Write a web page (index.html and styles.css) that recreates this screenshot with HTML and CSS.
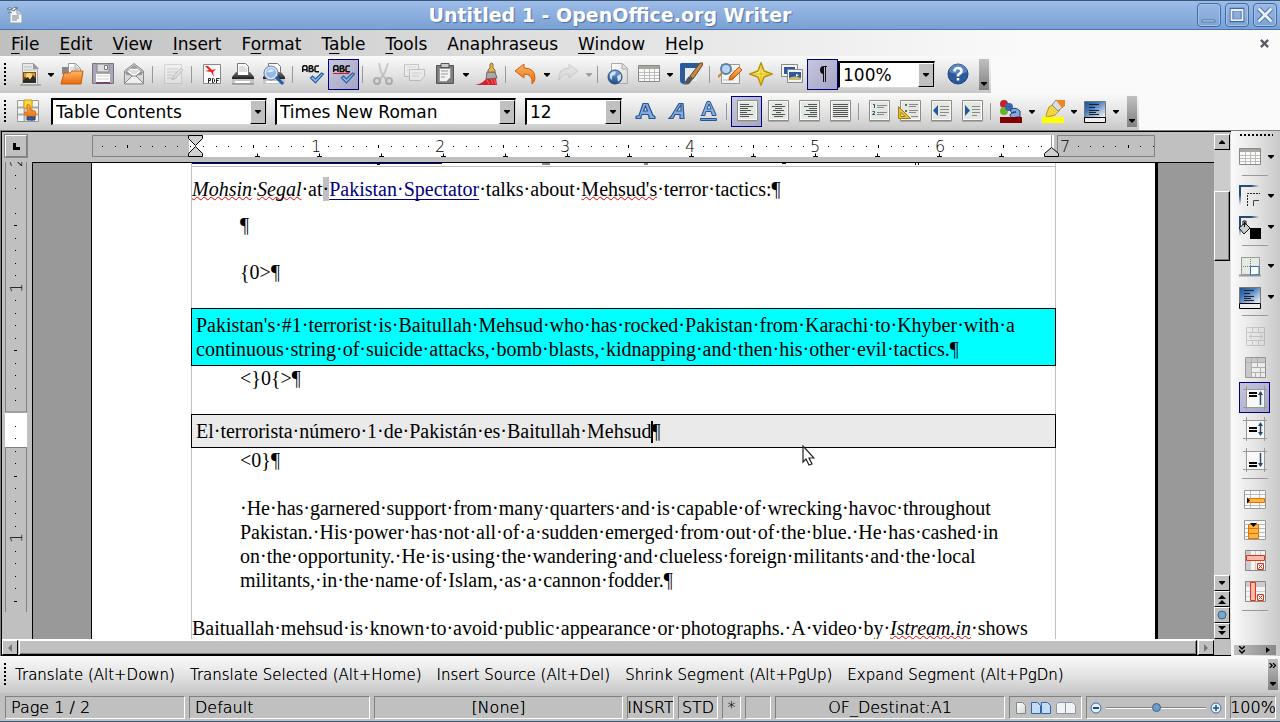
FILE: index.html
```html
<!DOCTYPE html>
<html lang="en">
<head>
<meta charset="utf-8">
<title>Untitled 1 - OpenOffice.org Writer</title>
<link rel="stylesheet" href="styles.css">
</head>
<body>
<svg class="sprite" aria-hidden="true">
  <defs>
    <linearGradient id="g-paper" x2="1" y2="1"><stop stop-color="#fff"/><stop offset="1" stop-color="#d2d6d2"/></linearGradient>
    <linearGradient id="g-or" x2="0" y2="1"><stop stop-color="#ffb768"/><stop offset="1" stop-color="#e8690b"/></linearGradient>
    <linearGradient id="g-blue" x2="0" y2="1"><stop stop-color="#7fa8dc"/><stop offset="1" stop-color="#1e4784"/></linearGradient>
    <linearGradient id="g-bg" x2="1" y2="1"><stop stop-color="#1d4f91"/><stop offset=".35" stop-color="#3f77bb"/><stop offset="1" stop-color="#fff"/></linearGradient>
    <linearGradient id="g-edge" x2="1" y2="0"><stop stop-color="#274b78"/><stop offset=".6" stop-color="#274b78"/><stop offset="1" stop-color="#274b78" stop-opacity="0"/></linearGradient>
    <linearGradient id="g-side" x2="0" y2="1"><stop stop-color="#274b78"/><stop offset=".5" stop-color="#274b78"/><stop offset="1" stop-color="#274b78" stop-opacity="0"/></linearGradient>
    <linearGradient id="g-gold" x2="1" y2="1"><stop stop-color="#fffbd0"/><stop offset="1" stop-color="#f0c800"/></linearGradient>
    <linearGradient id="g-dark" x2="0" y2="1"><stop stop-color="#777"/><stop offset="1" stop-color="#111"/></linearGradient>
  </defs>
  <symbol id="i-app" viewBox="0 0 16 18"><path d="M3 4h8l4 4v9H3z" fill="#f6f8fa" stroke="#8ba0b4"/><path d="M10 4v4h5" fill="#cdd9e4" stroke="#8ba0b4"/><path d="M5 10h7M5 12h7M5 14h5" stroke="#6c8496"/><path d="M0 3q3-3 5 0 2-3 6-1-3 0-4 3-3-2-7-2M1 7q2-2 4 0" fill="#fff" stroke="#5f7486"/></symbol>
  <symbol id="i-new" viewBox="0 0 24 24"><path d="M2 22h21v2H2z" fill="#aaa"/><path d="M4.500 1.500h11l4 4v17h-15z" fill="#e8e8e8" stroke="#aaa"/><path d="M15 1l6 6h-6z" fill="#999"/><path d="M6 5h8M6 8h12" stroke="#bbb"/><path d="M5 10h13v11H5z" fill="#76501e"/><path d="M6 11h11v4H6z" fill="#d79a31"/><circle cx="11" cy="14" r="3" fill="#ffd775"/><path d="M5 18l5-3 2 3 3-5 3 4v4H5z" fill="#2f2c22"/></symbol>
  <symbol id="i-open" viewBox="0 0 24 24"><path d="M2 5h6l2 2h7v5H2z" fill="#888"/><path d="M8.500 1.500h7l5 5v7h-12z" fill="#fff" stroke="#999"/><path d="M15 2v5h5" fill="#ddd" stroke="#aaa"/><path d="M10 6h4M10 8h8" stroke="#bbb"/><path d="M4 11h6l2-2h11l-2 13H1z" fill="url(#g-or)" stroke="#c75c0b"/></symbol>
  <symbol id="i-save" viewBox="0 0 24 24"><path d="M1.500 1.500h21v20h-21z" fill="#aaa6b8" stroke="#77747f"/><path d="M6 2h12v8H6z" fill="#dcdce4" stroke="#888"/><path d="M13.500 3.500h3v4h-3z" fill="#fff" stroke="#777"/><path d="M4.500 11.500h15v9h-15z" fill="#fff" stroke="#aaa"/><path d="M6 14h12M6 17h12" stroke="#ccc"/><path d="M5 20h14v2H5z" fill="#76447a"/></symbol>
  <symbol id="i-mail" viewBox="0 0 24 24"><path d="M2.500 9L12 1.500 21.500 9v13h-19z" fill="#d8d8d8" stroke="#888"/><path d="M4 9l8-6 8 6v4H4z" fill="#999"/><path d="M5 9.500l3-3h8l3 3-7 6z" fill="#fff" stroke="#aaa"/><path d="M7 9h10M9 11h6" stroke="#bbb"/><path d="M3 21l7-7h4l7 7M3 10l7 4M21 10l-7 4" fill="#eee" stroke="#888"/></symbol>
  <symbol id="i-edit" viewBox="0 0 24 24"><path d="M3.500 2.500h17v19h-17z" fill="#f4f4f4" stroke="#999"/><path d="M6 7h11M6 10h10M6 13h6M6 16h5" stroke="#aaa" stroke-width="1.500"/><path d="M11 18l2-5 7-7 2 2-7 8z" fill="#ccc" stroke="#666"/></symbol>
  <symbol id="i-pdf" viewBox="0 0 24 24"><path d="M3.500 2.500h17v19h-17z" fill="#fafafa" stroke="#888"/><path d="M5 4l3 0 4 4 4-1-3 3 1 5-3-5-6-1 4-1z" fill="#e22"/><g fill="none" stroke="#222" stroke-width="1"><path d="M8.500 21v-4.500h2v2h-2M12.500 16.500h1l1 1v2l-1 1h-1zM16.500 21v-4.500h3M16.500 18.500h2"/></g></symbol>
  <symbol id="i-print" viewBox="0 0 24 24"><path d="M6.500 1.500h8l3 3v9h-11z" fill="#fff" stroke="#777"/><path d="M8 5h6M8 7h8M8 9h8" stroke="#bbb"/><path d="M1 15l4-5h2v3h11v-3h1l4 5v3H1z" fill="url(#g-dark)"/><path d="M1 17h22v5H1z" fill="#c4c4c8"/><path d="M4 19h15v2H4z" fill="#fff"/><path d="M1 22h22" stroke="#777"/></symbol>
  <symbol id="i-preview" viewBox="0 0 24 24"><path d="M6.500 1.500h9l3 3v9h-12z" fill="#fff" stroke="#777"/><path d="M1 15l4-5h14l4 5v3H1z" fill="url(#g-dark)"/><path d="M1 17h22v5H1z" fill="#c4c4c8"/><path d="M4 19h13v2H4z" fill="#fff"/><circle cx="9" cy="11" r="6" fill="#8fb9e8" stroke="#dfe6ee" stroke-width="2"/><circle cx="9" cy="11" r="7" fill="none" stroke="#5c7ba6"/><path d="M5 10q3-5 7-2-1 3-7 2" fill="#dcebfa"/><path d="M14 15l7 7" stroke="#235ba5" stroke-width="3"/></symbol>
  <symbol id="i-abc" viewBox="0 0 24 24"><g fill="none" stroke="#111" stroke-width="1.500"><path d="M1.700 10V5l1-1.200h2.500l.8 1.200v5M2 7.700h4M8.200 3.800v5.600h3l1-1v-1l-1-1H8.500M8.200 3.800h2.500l1 1-1 1.500M18 4h-3l-1 1v4l1 .7h3"/></g></symbol>
  <symbol id="i-check" viewBox="0 0 24 24"><path d="M9.500 16l2-2 3 3 6-6 2 1-8 9z" fill="#8cc2f2" stroke="#2c5d99" stroke-width="1.200"/></symbol>
  <symbol id="i-cut" viewBox="0 0 24 24"><path d="M8 1l2 9 6 9M17 1l-3 9-6 9" fill="none" stroke="#777" stroke-width="2"/><circle cx="6" cy="19" r="3" fill="none" stroke="#444" stroke-width="2"/><circle cx="18" cy="19" r="3" fill="none" stroke="#444" stroke-width="2"/></symbol>
  <symbol id="i-copy" viewBox="0 0 24 24"><path d="M2.500 2.500h14v12h-14z" fill="#f5f5f5" stroke="#666"/><path d="M5 5h9M5 8h3" stroke="#999"/><path d="M7.500 7.500h15v7l-4 4h-11z" fill="#f5f5f5" stroke="#666"/><path d="M10 11h10M10 14h7" stroke="#999"/></symbol>
  <symbol id="i-paste" viewBox="0 0 24 24"><path d="M3.500 3.500h17v18h-17z" fill="#7d7d7d" stroke="#555"/><path d="M8 1.500h8v4H8z" fill="#ccc" stroke="#555"/><path d="M6.500 6.500h11v9l-4 4h-7z" fill="#f2f2f2" stroke="#999"/><path d="M8 9h7M8 12h7M8 15h4" stroke="#999"/></symbol>
  <symbol id="i-brush" viewBox="0 0 24 24"><path d="M0 23q7-1 11-6l10-1 1 7z" fill="#d3202c"/><path d="M12 18l2 4m2-5l2 5m1-5l2 5" stroke="#f66"/><path d="M12 10h8l2 6-11 1z" fill="#aaa" stroke="#666"/><path d="M13 10V8l2-2V2q2-2 3 0v4l2 2v2z" fill="#e5b35d" stroke="#8f6a2c"/></symbol>
  <symbol id="i-undo" viewBox="0 0 24 24"><path d="M1 9l9-7v4q11 0 11 10 0 3-3 6 1-10-8-10v4z" fill="url(#g-or)" stroke="#d0600a"/></symbol>
  <symbol id="i-redo" viewBox="0 0 24 24"><path d="M22 9l-9-7v4Q2 6 3 18q3-6 10-6v4z" fill="#ccc" stroke="#888"/></symbol>
  <symbol id="i-link" viewBox="0 0 24 24"><path d="M5.500 1.500h11l5 5v15h-16z" fill="url(#g-paper)" stroke="#aaa"/><path d="M16 2v5h5" fill="#ddd" stroke="#aaa"/><circle cx="9" cy="15" r="7" fill="url(#g-blue)" stroke="#245089"/><path d="M4 12q3-4 6-2l-1 3-3 1v4l-2-2zM11 14l4-2v5l-3 3z" fill="#cfe2f5"/></symbol>
  <symbol id="i-table" viewBox="0 0 24 24"><path d="M1.500 3.500h21v16h-21z" fill="#fafaf8" stroke="#888"/><path d="M2 4h20v3H2z" fill="#a8a8a0"/><path d="M2 10.500h20M2 13.500h20M2 16.500h20M7.500 7v12M12.500 7v12M17.500 7v12" stroke="#bbb"/></symbol>
  <symbol id="i-draw" viewBox="0 0 24 24"><path d="M2 1h20L5 22q-4 0-4-4V2z" fill="#2a5a9a"/><path d="M6 6h12v13H6z" fill="#e6ebf2"/><path d="M11 14L21 1h3l-1 3-9 13z" fill="#c48a4b" stroke="#6d4a25"/><path d="M10 14l4 3-4 5q-4 1-6 0 3-1 3-4z" fill="#555"/></symbol>
  <symbol id="i-find" viewBox="0 0 24 24"><path d="M3.500 2.500h18v19h-18z" fill="#f3f3f0" stroke="#999"/><path d="M12 9h6M5 18h11" stroke="#bbb"/><circle cx="8" cy="7" r="5" fill="#b9d4ef" stroke="#5d7fae" stroke-width="2"/><path d="M4 11l-4 4" stroke="#b89022" stroke-width="2"/><path d="M11 18l1-4 9-9 3 3-9 9z" fill="url(#g-or)" stroke="#b75c0c"/></symbol>
  <symbol id="i-nav" viewBox="0 0 24 24"><path d="M12 1l3 8 8 3-8 3-3 8-3-8-8-3 8-3z" fill="url(#g-gold)" stroke="#b39400" stroke-width="1.500"/><path d="M12 3v18M3 12h18" stroke="#dfbf13"/></symbol>
  <symbol id="i-gallery" viewBox="0 0 24 24"><path d="M1.500 2.500h16v12h-16z" fill="#f4f4f4" stroke="#888"/><path d="M4 5h11v7H4z" fill="#2a5a9a"/><path d="M7.500 7.500h15v13h-15z" fill="#f4f4f4" stroke="#888"/><path d="M9 10h12v8H9z" fill="#2a5a9a"/><path d="M9 16q5-3 12 0v2H9z" fill="#c9b96a"/><path d="M16 12l3 1-3 2z" fill="#fff"/></symbol>
  <symbol id="i-pil" viewBox="0 0 24 24"><path d="M9 8q0-4 4-4h3v1h-1v15h-1V5h-1v15h-1v-8q-3-.5-3-4" fill="#111"/></symbol>
  <symbol id="i-help" viewBox="0 0 24 24"><circle cx="12" cy="12" r="10" fill="#2c589c" stroke="#1d4481"/><path d="M3 10a9 8 0 0 1 18 0q-9 4-18 0" fill="#7198cf" opacity=".7"/><path d="M8.500 9.500q0-3.500 3.500-3.500t3.500 3q0 1.700-3.500 4v1.500M12 16v2.500" fill="none" stroke="#fff" stroke-width="2.600"/></symbol>
  <symbol id="i-styles" viewBox="0 0 24 24"><path d="M1.500 1.500h21v21h-21z" fill="#f4f4f2" stroke="#999"/><path d="M2 8.500h20M2 15.500h20M8.500 2v20M15.500 2v20" stroke="#aaa" stroke-width="2"/><path d="M8 1h8v8H8z" fill="#ffd84a" stroke="#c9a000"/><path d="M11 6q2-2 3 1v4l5 1q2 2 0 7h-7l-4-5q1-2 3 0z" fill="url(#g-or)" stroke="#d96f0b"/><path d="M11 18h8v3h-8z" fill="#2d5fa4" stroke="#173f78"/></symbol>
  <symbol id="i-bold" viewBox="0 0 24 24"><path d="M2 19.500h5v-2l1-2h6l1 2v2h6v-2l-2-1L14 4.500H9L5 16.500l-3 1zM9.500 12l2-5 2 5z" fill="#83aae0" stroke="#27558f" fill-rule="evenodd" stroke-width="1.200"/></symbol>
  <symbol id="i-italic" viewBox="0 0 24 24"><path d="M4 19.500h4l2-4h5v4h4L18 4.500h-4L6 17.500zM12 12l4-6v6z" fill="#83aae0" stroke="#27558f" fill-rule="evenodd" stroke-width="1.200"/></symbol>
  <symbol id="i-under" viewBox="0 0 24 24"><path d="M5 16.500h4v-1l1-3h5l1 3v1h4v-1L14 2.500h-3L6 15.500zM11 10l2-5 2 5z" fill="#83aae0" stroke="#27558f" fill-rule="evenodd"/><path d="M4.500 19.500h16v2h-16z" fill="#6f9bd8" stroke="#27558f"/></symbol>
  <symbol id="i-paper" viewBox="0 0 24 24"><path d="M2 22.500h21" stroke="#aaa"/><path d="M2.500 1.500h20v20h-20z" fill="#fafafa" stroke="#8d8d85"/><path d="M4 3h17v17H4z" fill="#e4e8e2"/></symbol>
  <symbol id="i-left" viewBox="0 0 24 24"><use href="#i-paper"/><path d="M5 5.500h9M5 7.500h13M5 9.500h8M5 11.500h11M5 13.500h7M5 15.500h13M5 17.500h9" stroke="#555"/></symbol>
  <symbol id="i-center" viewBox="0 0 24 24"><use href="#i-paper"/><path d="M9 5.500h7M6 7.500h13M9 9.500h7M7 11.500h11M10 13.500h5M6 15.500h13M8 17.500h9" stroke="#555"/></symbol>
  <symbol id="i-right" viewBox="0 0 24 24"><use href="#i-paper"/><path d="M11 5.500h9M7 7.500h13M12 9.500h8M9 11.500h11M13 13.500h7M7 15.500h13M11 17.500h9" stroke="#555"/></symbol>
  <symbol id="i-just" viewBox="0 0 24 24"><use href="#i-paper"/><path d="M5 5.500h15M5 7.500h15M5 9.500h15M5 11.500h15M5 13.500h15M5 15.500h15M5 17.500h15" stroke="#555"/></symbol>
  <symbol id="i-num" viewBox="0 0 24 24"><use href="#i-paper"/><path d="M6 5.500h1.500V9M5.500 12.500h2v1.500l-2 1.500h2.500" fill="none" stroke="#245391"/><path d="M10 6.500h10M10 8.500h7M10 13.500h10M10 15.500h7" stroke="#888"/></symbol>
  <symbol id="i-bul" viewBox="0 0 24 24"><use href="#i-paper"/><path d="M7 5h2v2H7zM7 11h2v2H7z" fill="#666"/><path d="M11 5.500h9M11 7.500h7M11 11.500h9M11 13.500h7M13 17.500h7" stroke="#888"/><path d="M.5 7.500v12h12zM3 13.500v4h4z" fill="#e7bd35" fill-rule="evenodd" stroke="#a77e0a"/></symbol>
  <symbol id="i-dec" viewBox="0 0 24 24"><use href="#i-paper"/><path d="M9 6v11L4 11.500z" fill="#2459a0"/><path d="M11 7.500h9M11 10.500h9M11 13.500h9M11 16.500h6" stroke="#888"/></symbol>
  <symbol id="i-inc" viewBox="0 0 24 24"><use href="#i-paper"/><path d="M5 6v11l5-5.500z" fill="#2459a0"/><path d="M12 7.500h8M12 10.500h8M12 13.500h8M12 16.500h5" stroke="#888"/></symbol>
  <symbol id="i-fcol" viewBox="0 0 24 24"><circle cx="5" cy="5" r="4" fill="#c8202e"/><circle cx="5" cy="12" r="4" fill="#66b52e"/><circle cx="10" cy="8" r="4" fill="#3a66ae"/><path d="M11 11q5-4 10 1v6h-3l-5 1q-4-3 0-5l4-1q-2-1-4 1z" fill="#83aae0" stroke="#1d4275"/><path d="M1 18h22v6H1z" fill="#800000"/></symbol>
  <symbol id="i-high" viewBox="0 0 24 24"><path d="M5 16l3-8 5-3 6 6-5 5-8 2z" fill="#f3d540" stroke="#b8960e"/><path d="M11 6l4-5 7 7-5 4z" fill="#ddd" stroke="#888"/><path d="M15 1h9v6l-3 2z" fill="#ef8526"/><path d="M1 18h22v6H1z" fill="#ff0"/></symbol>
  <symbol id="i-bgc" viewBox="0 0 24 24"><path d="M1.500 2.500h21v16h-21z" fill="url(#g-bg)" stroke="#777"/><path d="M6 5.500h10M6 8.500h6M6 11.500h10M6 13.500h7M6 15.500h10" stroke="#222"/><path d="M1.500 18.500h21v5h-21z" fill="#eee" stroke="#000"/></symbol>
  <symbol id="i-line" viewBox="0 0 24 24"><path d="M1 1h20v2H1z" fill="url(#g-edge)"/><path d="M1 1h2v20H1z" fill="url(#g-side)"/><path d="M9.500 22V9.500H22" fill="none" stroke="#222" stroke-dasharray="2 1"/><path d="M15.500 22v-5.500H21" fill="none" stroke="#444"/></symbol>
  <symbol id="i-fill" viewBox="0 0 24 24"><path d="M1 1h20v2H1z" fill="url(#g-edge)"/><path d="M1 1h2v20H1z" fill="url(#g-side)"/><path d="M6.500 7v5M1 13l6-5 5 5-6 6z" fill="#ccc" stroke="#111"/><path d="M5 10V6h3v4" fill="none" stroke="#111"/><path d="M12 13h11v11H12z"/></symbol>
  <symbol id="i-bord" viewBox="0 0 24 24"><path d="M1 21.500h22" stroke="#999" stroke-width="2"/><path d="M3.500 3.500h18v17h-18z" fill="#e6eae4" stroke="#999"/><path d="M12.500 5v7M5 12.500h7" stroke="#777" stroke-dasharray="1 1"/><path d="M12.500 21v-8.500H21V20.500z" fill="#fff" stroke="#3469ad"/></symbol>
  <symbol id="i-merge" viewBox="0 0 24 24"><path d="M3.500 3.500h18v18h-18zM9.500 4v4M15.500 4v4M3.500 8.500h18v8h-18zM9.500 17v4M15.500 17v4M7 12.500h12M9 10l-3 2.500L9 15M17 10l3 2.500-3 2.500" fill="none" stroke="#777"/></symbol>
  <symbol id="i-split" viewBox="0 0 24 24"><path d="M2.500 2.500h20v20h-20z" fill="#f3f3f3" stroke="#777"/><path d="M3 3h19v4H3zM3 7h5v15H3z" fill="#bbb"/><path d="M8.500 3v19M3 7.500h19M8.500 12.500H22M8.500 17.500H22M14.500 3v9M17.500 12v10M12.500 17v5" stroke="#999"/></symbol>
  <symbol id="i-frame" viewBox="0 0 24 24"><path d="M3 3h18v18H3z" fill="#f8f8f8"/><path d="M0 3.500h24M0 21.500h24M3.500 0v24M21.500 0v24" stroke="#999"/></symbol>
  <symbol id="i-top" viewBox="0 0 24 24"><use href="#i-frame"/><path d="M6 7h8M6 10h8" stroke="#000" stroke-width="2"/><path d="M17.500 6v13" stroke="#274b78" stroke-width="1.500"/><path d="M15 9l2.500-4L20 9z" fill="#274b78"/></symbol>
  <symbol id="i-mid" viewBox="0 0 24 24"><use href="#i-frame"/><path d="M6 11h8M6 14h8" stroke="#000" stroke-width="2"/><path d="M17.500 7v10" stroke="#274b78" stroke-width="1.500"/><path d="M15 9l2.500-4L20 9zM15 15l2.500 4 2.500-4z" fill="#274b78"/></symbol>
  <symbol id="i-bot" viewBox="0 0 24 24"><use href="#i-frame"/><path d="M6 15h8M6 18h8" stroke="#000" stroke-width="2"/><path d="M17.500 5v13" stroke="#274b78" stroke-width="1.500"/><path d="M15 15l2.500 4 2.500-4z" fill="#274b78"/></symbol>
  <symbol id="i-irow" viewBox="0 0 24 24"><path d="M1.500 3.500h21v18h-21z" fill="#fafafa" stroke="#999"/><path d="M7.500 4v17M16.500 4v17M2 7.500h20M2 18.500h20" stroke="#bbb"/><path d="M4.500 11.500h17v4h-17z" fill="#ffb347" stroke="#dc7500"/><path d="M4 10.500v6l3-3z"/></symbol>
  <symbol id="i-icol" viewBox="0 0 24 24"><path d="M1.500 2.500h21v19h-21z" fill="#fafafa" stroke="#999"/><path d="M2 6.500h20M2 10.500h20M2 14.500h20M2 18.500h20" stroke="#bbb"/><path d="M5.500 6.500h10v14h-10zM5.500 10.500h10M5.500 15.500h10" fill="#ffb347" stroke="#dc7500"/><path d="M7 5h7l-3.500 4z"/></symbol>
  <symbol id="i-x" viewBox="0 0 24 24"><path d="M14.500 14.500h6v6h-6zM15.500 15.500l4 4m0-4l-4 4" fill="#fff" stroke="#d83a17"/></symbol>
  <symbol id="i-drow" viewBox="0 0 24 24"><path d="M2.500 1.500h20v20h-20z" fill="#f4f4f4" stroke="#888"/><path d="M3 2h4v19H3z" fill="#ccc"/><path d="M7.500 2v19M12.500 2v19M17.500 2v19" stroke="#ccc"/><path d="M3.500 6.500h18v5h-18z" fill="#f9b9ac" stroke="#d83a17"/><use href="#i-x"/></symbol>
  <symbol id="i-dcol" viewBox="0 0 24 24"><path d="M2.500 1.500h20v20h-20z" fill="#f4f4f4" stroke="#888"/><path d="M3 2h19v4H3z" fill="#ccc"/><path d="M3 6.500h19M3 11.500h19M3 16.500h19" stroke="#ccc"/><path d="M7.500 2.500h5v18h-5z" fill="#f9b9ac" stroke="#d83a17"/><use href="#i-x"/></symbol>
  <symbol id="i-down" viewBox="0 0 8 5"><path d="M1 1h6v1L4 5 1 2z"/></symbol>
  <symbol id="i-p1" viewBox="0 0 10 12"><path d="M.5.500h6l3 3v8h-9z" fill="url(#g-paper)" stroke="#7b8794"/></symbol>
</svg>

<header class="title">
  <svg class="app"><use href="#i-app"/></svg>
  <h1>Untitled 1 - OpenOffice.org Writer</h1>
  <button aria-label="Minimize"><svg viewBox="0 0 24 24"><path d="M4.500 17.500h14v2h-14z" fill="#fff" stroke="#4169a0"/></svg></button>
  <button aria-label="Maximize"><svg viewBox="0 0 24 24"><path d="M6 6h12v12H6z" fill="none" stroke="#4169a0" stroke-width="4"/><path d="M6 6.500h12v11H6z" fill="none" stroke="#e9f0fa" stroke-width="2"/></svg></button>
  <button aria-label="Close"><svg viewBox="0 0 24 24"><path d="M5 5l14 14M19 5L5 19" stroke="#4169a0" stroke-width="5"/><path d="M5 5l14 14M19 5L5 19" stroke="#e9f0fa" stroke-width="3"/></svg></button>
</header>

<nav class="menu">
  <button><u>F</u>ile</button><button><u>E</u>dit</button><button><u>V</u>iew</button><button><u>I</u>nsert</button><button>F<u>o</u>rmat</button><button>T<u>a</u>ble</button><button><u>T</u>ools</button><button>Anaphraseus</button><button><u>W</u>indow</button><button><u>H</u>elp</button>
  <button class="shut" aria-label="Close document"><svg viewBox="0 0 10 10"><path d="M1 1l8 8M9 1L1 9" stroke="#555d66" stroke-width="2.500"/></svg></button>
</nav>

<div class="bar standard">
  <i class="grip"></i>
  <button class="tb" aria-label="New"><svg><use href="#i-new"/></svg></button><button class="dd" aria-label="New options"><svg><use href="#i-down"/></svg></button>
  <button class="tb" aria-label="Open"><svg><use href="#i-open"/></svg></button>
  <button class="tb" aria-label="Save"><svg><use href="#i-save"/></svg></button>
  <button class="tb" aria-label="E-mail"><svg><use href="#i-mail"/></svg></button>
  <i class="sep"></i>
  <button class="tb off" aria-label="Edit file"><svg><use href="#i-edit"/></svg></button>
  <i class="sep"></i>
  <button class="tb" aria-label="Export PDF"><svg><use href="#i-pdf"/></svg></button>
  <button class="tb" aria-label="Print"><svg><use href="#i-print"/></svg></button>
  <button class="tb" aria-label="Page preview"><svg><use href="#i-preview"/></svg></button>
  <i class="sep"></i>
  <button class="tb" aria-label="Spellcheck"><svg viewBox="0 0 24 24"><use href="#i-abc"/><use href="#i-check"/></svg></button>
  <button class="tb on" aria-label="AutoSpellcheck"><svg viewBox="0 0 24 24"><use href="#i-abc"/><path d="M1 12l1-1 1 1 1-1 1 1 1-1 1 1 1-1 1 1 1-1 1 1 1-1 1 1 1-1 1 1 1-1 1 1" fill="none" stroke="#e01020"/><use href="#i-check"/></svg></button>
  <i class="sep"></i>
  <button class="tb off" aria-label="Cut"><svg><use href="#i-cut"/></svg></button>
  <button class="tb off" aria-label="Copy"><svg><use href="#i-copy"/></svg></button>
  <button class="tb" aria-label="Paste"><svg><use href="#i-paste"/></svg></button><button class="dd" aria-label="Paste options"><svg><use href="#i-down"/></svg></button>
  <button class="tb" aria-label="Format paintbrush"><svg><use href="#i-brush"/></svg></button>
  <i class="sep"></i>
  <button class="tb" aria-label="Undo"><svg><use href="#i-undo"/></svg></button><button class="dd" aria-label="Undo list"><svg><use href="#i-down"/></svg></button>
  <button class="tb off" aria-label="Redo"><svg><use href="#i-redo"/></svg></button><button class="dd off" aria-label="Redo list"><svg><use href="#i-down"/></svg></button>
  <i class="sep"></i>
  <button class="tb" aria-label="Hyperlink"><svg><use href="#i-link"/></svg></button>
  <button class="tb" aria-label="Table"><svg><use href="#i-table"/></svg></button><button class="dd" aria-label="Table size"><svg><use href="#i-down"/></svg></button>
  <button class="tb" aria-label="Draw functions"><svg><use href="#i-draw"/></svg></button>
  <i class="sep"></i>
  <button class="tb" aria-label="Find and replace"><svg><use href="#i-find"/></svg></button>
  <button class="tb" aria-label="Navigator"><svg><use href="#i-nav"/></svg></button>
  <button class="tb" aria-label="Gallery"><svg><use href="#i-gallery"/></svg></button>
  <button class="tb on" aria-label="Nonprinting characters"><svg><use href="#i-pil"/></svg></button>
  <label class="combo zoom"><select aria-label="Zoom"><option>100%</option></select><span><svg><use href="#i-down"/></svg></span></label>
  <button class="tb help" aria-label="Help"><svg><use href="#i-help"/></svg></button>
  <button class="more" aria-label="More"><svg><use href="#i-down"/></svg></button>
</div>

<div class="bar formatting">
  <i class="grip"></i>
  <button class="tb" aria-label="Styles and Formatting"><svg><use href="#i-styles"/></svg></button>
  <label class="combo style"><select aria-label="Apply style"><option>Table Contents</option></select><span><svg><use href="#i-down"/></svg></span></label>
  <label class="combo font"><select aria-label="Font name"><option>Times New Roman</option></select><span><svg><use href="#i-down"/></svg></span></label>
  <label class="combo size"><select aria-label="Font size"><option>12</option></select><span><svg><use href="#i-down"/></svg></span></label>
  <button class="tb bold" aria-label="Bold"><svg><use href="#i-bold"/></svg></button>
  <button class="tb" aria-label="Italic"><svg><use href="#i-italic"/></svg></button>
  <button class="tb" aria-label="Underline"><svg><use href="#i-under"/></svg></button>
  <i class="sep"></i>
  <button class="tb on" aria-label="Align left"><svg><use href="#i-left"/></svg></button>
  <button class="tb" aria-label="Centered"><svg><use href="#i-center"/></svg></button>
  <button class="tb" aria-label="Align right"><svg><use href="#i-right"/></svg></button>
  <button class="tb" aria-label="Justified"><svg><use href="#i-just"/></svg></button>
  <i class="sep"></i>
  <button class="tb" aria-label="Numbering"><svg><use href="#i-num"/></svg></button>
  <button class="tb" aria-label="Bullets"><svg><use href="#i-bul"/></svg></button>
  <button class="tb" aria-label="Decrease indent"><svg><use href="#i-dec"/></svg></button>
  <button class="tb" aria-label="Increase indent"><svg><use href="#i-inc"/></svg></button>
  <i class="sep"></i>
  <button class="tb" aria-label="Font color"><svg><use href="#i-fcol"/></svg></button><button class="dd" aria-label="Font colors"><svg><use href="#i-down"/></svg></button>
  <button class="tb" aria-label="Highlighting"><svg><use href="#i-high"/></svg></button><button class="dd" aria-label="Highlight colors"><svg><use href="#i-down"/></svg></button>
  <button class="tb" aria-label="Background color"><svg><use href="#i-bgc"/></svg></button><button class="dd" aria-label="Background colors"><svg><use href="#i-down"/></svg></button>
  <button class="more" aria-label="More"><svg><use href="#i-down"/></svg></button>
</div>

<main class="work">
  <div class="frame">
    <button class="tabkind" aria-label="Tab type"><svg viewBox="0 0 20 20"><path d="M7 7h3v4h4v3H7z"/></svg></button>
    <svg class="hruler" width="1064" height="24">
      <path d="M.5.500h97v21H.5zM965.500.500h97v21h-97z" fill="#c0c0c0" stroke="#808080"/>
      <path d="M97 0h865v22H97z" fill="#fff"/>
      <path d="M10 11.500h90M986 11.500h77" stroke="#000" stroke-dasharray="1 24"/><path d="M23 11.500h77M998 11.500h64" stroke="#000" stroke-dasharray="1 24"/>
      <path d="M111 11.500h840M124 11.500h840" stroke="#000" stroke-dasharray="1 24"/>
      <path d="M35.500 10v3M161.500 10v3M286.500 10v3M411.500 10v3M536.500 10v3M661.500 10v3M786.500 10v3M911.500 10v3M1036.500 10v3" stroke="#000"/>
      <path d="M217 5h14v13h-14zM341 5h14v13h-14zM466 5h14v13h-14zM591 5h14v13h-14zM716 5h14v13h-14zM841 5h14v13h-14z" fill="#fff"/>
      <path d="M163 21.500h5m-2.500 0v-3M225 21.500h5m-2.500 0v-3M287 21.500h5m-2.500 0v-3M349 21.500h5m-2.500 0v-3M411 21.500h5m-2.500 0v-3M473 21.500h5m-2.500 0v-3M535 21.500h5m-2.500 0v-3M597 21.500h5m-2.500 0v-3M659 21.500h5m-2.500 0v-3M721 21.500h5m-2.500 0v-3M783 21.500h5m-2.500 0v-3M845 21.500h5m-2.500 0v-3M907 21.500h5m-2.500 0v-3" stroke="#000"/>
      <g text-anchor="middle"><text x="224" y="17">1</text><text x="348" y="17">2</text><text x="473" y="17">3</text><text x="598" y="17">4</text><text x="723" y="17">5</text><text x="848" y="17">6</text><text x="973" y="17">7</text></g>
      <path d="M96.500.500h14v3l-7 7-7-7zM96.500 21.500v-3l7-7 7 7v3zM952.500 21.500v-3l7-6 7 6v3z" fill="#d0d0d0" stroke="#000"/><path d="M959.500 0v12" stroke="#999"/>
    </svg>
    <svg class="vruler" width="24" height="450">
      <path d="M.500-1v251h21V-1M.5 450V285.500h21V450" fill="none" stroke="#808080"/>
      <path d="M0 251h22v34H0z" fill="#fff"/>
      <path d="M10 13.500h1M10 26.500h1M10 51.500h1M9 63.500h3M10 76.500h1M10 88.500h1M10 101.500h1M10 113.500h1M10 138.500h1M10 151.500h1M10 163.500h1M10 176.500h1M9 188.500h3M10 201.500h1M10 213.500h1M10 226.500h1M10 238.500h1M10 264.500h1M10 276.500h1M10 289.500h1M10 301.500h1M9 314.500h3M10 326.500h1M10 339.500h1M10 351.500h1M10 364.500h1M10 389.500h1M10 401.500h1M10 414.500h1M10 426.500h1M9 439.500h3" stroke="#000"/>
      <g text-anchor="middle"><text transform="translate(17 0) rotate(-90)">2</text><text transform="translate(17 126) rotate(-90)">1</text><text transform="translate(17 376) rotate(-90)">1</text></g>
    </svg>
    <section class="view">
      <article class="page">
        <div class="column">
          <svg class="prev" width="863" height="3"><path d="M0 .5h250" stroke="#000080"/><path d="M185 1.500h3" stroke="#000080"/><path d="M350 1h8M452 1h4M590 .500h4M723.500 0v2M726.500 0v2" stroke="#111"/></svg>
          <p class="lead"><em><span class="bad">Mohsin</span>·<span class="bad">Segal</span></em>·at<span class="field">·</span><a href="#spectator">Pakistan·Spectator</a>·talks·about·<span class="bad">Mehsud's</span>·terror·tactics:¶</p>
          <p class="quote blank">¶</p>
          <p class="quote">{0&gt;¶</p>
          <div class="cell source">Pakistan's·#1·terrorist·is·Baitullah·Mehsud·who·has·rocked·Pakistan·from·Karachi·to·Khyber·with·a<br>continuous·string·of·suicide·attacks,·bomb·blasts,·kidnapping·and·then·his·other·evil·tactics.¶</div>
          <p class="quote">&lt;}0{&gt;¶</p>
          <div class="cell target">El·terrorista·número·1·de·Pakistán·es·Baitullah·Mehsud<span class="caret"></span>¶</div>
          <p class="quote">&lt;0}¶</p>
          <p class="quote">·He·has·garnered·support·from·many·quarters·and·is·capable·of·wrecking·havoc·throughout<br>Pakistan.·His·power·has·not·all·of·a·sudden·emerged·from·out·of·the·blue.·He·has·cashed·in<br>on·the·opportunity.·He·is·using·the·wandering·and·clueless·foreign·militants·and·the·local<br>militants,·in·the·name·of·Islam,·as·a·cannon·fodder.¶</p>
          <p class="last">Baituallah·mehsud·is·known·to·avoid·public·appearance·or·photographs.·A·video·by·<em class="bad">Istream.in</em>·shows</p>
        </div>
      </article>
      <svg class="pointer" viewBox="0 0 13 21"><path d="M1 1v16l3-3 3 6 3-1-3-6h5z" fill="#fff" stroke="#222" stroke-width="1.200"/></svg>
    </section>
    <div class="vscroll">
      <button aria-label="Scroll up"><svg viewBox="0 0 10 10"><path d="M2 7V6l3-3 3 3v1z"/></svg></button>
      <div class="track"><div class="thumb"></div></div>
      <button aria-label="Scroll down"><svg viewBox="0 0 10 10"><path d="M2 3v1l3 3 3-3V3z"/></svg></button>
      <button aria-label="Previous page"><svg viewBox="0 0 10 10"><path d="M1 5l4-4 4 4zM1 10l4-4 4 4z"/></svg></button>
      <button aria-label="Navigation"><svg viewBox="0 0 10 10"><circle cx="5" cy="5" r="4" fill="#79a6cb" stroke="#39658a"/></svg></button>
      <button aria-label="Next page"><svg viewBox="0 0 10 10"><path d="M1 0l4 4 4-4zM1 5l4 4 4-4z"/></svg></button>
    </div>
    <div class="hscroll">
      <button aria-label="Scroll left"><svg viewBox="0 0 8 10"><path d="M6 1v8L2 5z" fill="#777"/></svg></button>
      <div class="thumb"></div>
      <button aria-label="Scroll right"><svg viewBox="0 0 8 10"><path d="M2 1v8l4-4z" fill="#777"/></svg></button>
    </div>
  </div>
  <aside class="side">
    <i class="hgrip"></i>
    <div><button class="tb" aria-label="Insert table"><svg><use href="#i-table"/></svg></button><button class="dd" aria-label="Table size"><svg><use href="#i-down"/></svg></button></div>
    <i class="hsep"></i>
    <div><button class="tb" aria-label="Line style"><svg><use href="#i-line"/></svg></button><button class="dd" aria-label="Line styles"><svg><use href="#i-down"/></svg></button></div>
    <div><button class="tb" aria-label="Line color"><svg><use href="#i-fill"/></svg></button><button class="dd" aria-label="Line colors"><svg><use href="#i-down"/></svg></button></div>
    <i class="hsep"></i>
    <div><button class="tb" aria-label="Borders"><svg><use href="#i-bord"/></svg></button><button class="dd" aria-label="Border kinds"><svg><use href="#i-down"/></svg></button></div>
    <div><button class="tb" aria-label="Cell background"><svg><use href="#i-bgc"/></svg></button><button class="dd" aria-label="Cell backgrounds"><svg><use href="#i-down"/></svg></button></div>
    <i class="hsep"></i>
    <div class="in"><button class="tb off" aria-label="Merge cells"><svg><use href="#i-merge"/></svg></button></div>
    <div class="in"><button class="tb half" aria-label="Split cells"><svg><use href="#i-split"/></svg></button></div>
    <div class="in"><button class="tb on" aria-label="Top"><svg><use href="#i-top"/></svg></button></div>
    <div class="in"><button class="tb" aria-label="Center vertically"><svg><use href="#i-mid"/></svg></button></div>
    <div class="in"><button class="tb" aria-label="Bottom"><svg><use href="#i-bot"/></svg></button></div>
    <i class="hsep"></i>
    <div class="in"><button class="tb" aria-label="Insert row"><svg><use href="#i-irow"/></svg></button></div>
    <div class="in"><button class="tb" aria-label="Insert column"><svg><use href="#i-icol"/></svg></button></div>
    <div class="in"><button class="tb" aria-label="Delete row"><svg><use href="#i-drow"/></svg></button></div>
    <div class="in"><button class="tb" aria-label="Delete column"><svg><use href="#i-dcol"/></svg></button></div>
    <i class="hsep"></i>
    <button class="sidemore" aria-label="More"><svg viewBox="0 0 6 8"><path d="M0 0l3 3 3-3M0 4l3 3 3-3" fill="none" stroke="#000" stroke-width="1.500"/></svg><svg viewBox="0 0 6 8"><path d="M1 1v6l4-3z"/></svg></button>
  </aside>
</main>

<div class="macros">
  <i class="grip"></i>
  <button>Translate (Alt+Down)</button><button>Translate Selected (Alt+Home)</button><button>Insert Source (Alt+Del)</button><button>Shrink Segment (Alt+PgUp)</button><button>Expand Segment (Alt+PgDn)</button>
  <button class="more" aria-label="More"><svg viewBox="0 0 8 6"><path d="M0 0l3 3-3 3M4 0l3 3-3 3" fill="none" stroke="#000" stroke-width="1.500"/></svg><svg><use href="#i-down"/></svg></button>
</div>

<footer class="status">
  <span class="l">Page 1 / 2</span><span class="l">Default</span><span>[None]</span><span>INSRT</span><span>STD</span><span>*</span><span></span><span>OF_Destinat:A1</span>
  <span class="views"><svg class="one"><use href="#i-p1"/></svg><svg viewBox="0 0 20 12"><path d="M.5.500h6l3 3v8h-9zM10.500.500h6l3 3v8h-9z" fill="#c4dcf5" stroke="#2f66a5"/></svg><svg viewBox="0 0 20 12"><path d="M.5 2.500l2-2h7v11h-9zM9.500.500h7l3 3v8h-10z" fill="#f0f2f4" stroke="#8b97a5"/></svg></span>
  <span class="slide"><button aria-label="Zoom out"><svg viewBox="0 0 12 12"><circle cx="6" cy="6" r="5" fill="#e5f0fa" stroke="#3c6c9b"/><path d="M3 6h6" stroke="#1d4d86" stroke-width="2"/></svg></button><input type="range" aria-label="Zoom level" value="50"><button aria-label="Zoom in"><svg viewBox="0 0 12 12"><circle cx="6" cy="6" r="5" fill="#e5f0fa" stroke="#3c6c9b"/><path d="M3 6h6M6 3v6" stroke="#1d4d86" stroke-width="1.500"/></svg></button></span>
  <span>100%</span>
</footer>
</body>
</html>
```
FILE: styles.css
```css
* { box-sizing: border-box; }
body {
  margin: 0;
  height: 100vh;
  display: flex;
  flex-direction: column;
  overflow: hidden;
  background: #fafafa;
  font: 17px/20px "DejaVu Sans", sans-serif;
  color: #000;
}
button { margin: 0; padding: 0; border: 0; background: none; font: inherit; color: inherit; text-shadow: inherit; }
svg { display: block; }
.sprite { position: absolute; width: 0; height: 0; }

/* title bar */
.title {
  flex: none;
  height: 30px;
  display: flex;
  align-items: center;
  gap: 4px;
  padding: 0 3px 0 7px;
  border-top: 1px solid #3c5878;
  border-bottom: 1px solid #4a74ab;
  background: linear-gradient(#9dbce8, #7aa1d3);
}
.title .app { width: 16px; height: 18px; }
.title h1 {
  flex: 1;
  margin: 0;
  font-size: 19px;
  line-height: 24px;
  text-align: center;
  color: #fff;
  text-shadow: 1px 1px 1px #4a6fa8;
}
.title button { width: 24px; height: 24px; border: 1px solid #416ba5; border-radius: 4px; box-shadow: inset 0 0 0 1px #a4c1ea; }
.title button svg { width: 22px; height: 22px; }

/* menu bar */
.menu {
  flex: none;
  height: 26px;
  display: flex;
  align-items: center;
  gap: 20px;
  padding: 1px 11px 0;
  background: linear-gradient(90deg, #c0c0c0, #fafafa 80%);
}
.menu u { text-decoration-thickness: 1px; text-underline-offset: 3px; }
.menu .shut { margin-left: auto; }
.menu .shut svg { width: 9px; height: 9px; }

/* toolbars */
.bar {
  flex: none;
  align-self: flex-start;
  height: 37px;
  display: flex;
  align-items: center;
  padding: 0 2px 1px 4px;
  background: linear-gradient(#fafafa, #e4e4e4 50%, #c8c8c8);
}
.grip {
  flex: none;
  width: 2px;
  height: 23px;
  background: repeating-linear-gradient(#000 0 2px, transparent 2px 4px);
}
.bar .grip { margin-right: 8px; }
.formatting .grip { margin-right: 6px; }
.tb {
  flex: none;
  width: 31px;
  height: 31px;
  display: flex;
  align-items: center;
  justify-content: center;
  border: 1px solid transparent;
}
.tb svg { width: 24px; height: 24px; }
.on { border-color: #000080; background: linear-gradient(135deg, #c6c6de, #a5a5c4); }
.off { opacity: .3; }
.half { opacity: .7; }
.dd { flex: none; width: 11px; height: 31px; display: flex; align-items: center; justify-content: center; }
.dd svg, .more svg, .combo svg { width: 8px; height: 5px; }
.sep { flex: none; width: 8px; height: 17px; background: linear-gradient(90deg, transparent 3px, #999 3px 4px, transparent 4px); }
.more {
  flex: none;
  width: 10px;
  height: 31px;
  display: flex;
  flex-direction: column;
  align-items: center;
  justify-content: flex-end;
  padding: 4px 0;
  background: linear-gradient(#c0c0c0, #808080);
}
.help { margin: 0 6px 0 7px; }
.combo {
  flex: none;
  height: 27px;
  display: flex;
  border: solid #000;
  border-width: 2px 1px 1px 2px;
  border-bottom-color: #d8d8d8;
  border-right-color: #d8d8d8;
  background: #fff;
}
.combo select {
  flex: 1;
  min-width: 0;
  appearance: none;
  border: 0;
  padding: 0 3px;
  background: #fff;
  color: #000;
  font: 17px/20px "DejaVu Sans", sans-serif;
}
.combo span {
  width: 16px;
  display: flex;
  align-items: center;
  justify-content: center;
  pointer-events: none;
  border: 1px solid;
  border-color: #fff #000 #000 #fff;
  background: #c0c0c0;
}
.zoom { width: 97px; }
.style { width: 216px; margin: 0 8px; }
.font { width: 241px; margin-right: 9px; }
.size { width: 97px; }
.bold { margin-left: 8px; }
.formatting .more { margin-left: 6px; }

/* work area */
.work { flex: 1; min-height: 0; display: flex; border-top: 1px solid #808080; border-left: 1px solid #808080; }
.frame {
  flex: 1;
  min-width: 0;
  display: grid;
  grid-template: 30px minmax(0, 1fr) 16px / 30px minmax(0, 1fr) 17px;
  border: solid #000;
  border-width: 1px 0 1px 1px;
  background: #c0c0c0;
}
.tabkind { width: 22px; height: 22px; margin: 3px; border: 1px solid; border-color: #fff #808080 #808080 #fff; outline: 1px solid #888; outline-offset: 0; }
.hruler { margin: 3px 0 0 60px; overflow: hidden; }
.hruler text, .vruler text { font: 200 16px "DejaVu Sans", sans-serif; }
.vruler { margin-left: 3px; overflow: hidden; }
.view {
  position: relative;
  overflow: hidden;
  padding: 0 56px 0 58px;
  background: #999;
  border: solid #000;
  border-width: 1px 0 0 1px;
}
.page { height: 100%; padding: 0 99px; background: #fff; border: solid #000; border-width: 0 3px 0 1px; }
.column {
  min-height: 100%;
  border: solid #c0c0c0;
  border-width: 0 1px;
  font: 20px/24px "Liberation Serif", "Times New Roman", serif;
  white-space: nowrap;
}
.prev { border-bottom: 1px solid #c0c0c0; box-sizing: content-box; width: 100%; }
.column p { margin: 0 0 24px; }
.column .lead { margin: 10px 0 12px; }
.column .quote { padding-left: 48px; }
.column .blank { margin-bottom: 23px; }
.cell { margin: 0 -1px; padding: 4px; border: 1px solid #000; }
.source { background: #0ff; }
.target { background: #eaeaea; }
.bad { text-decoration: underline wavy #e00 1px; text-underline-offset: 0; text-decoration-skip-ink: none; }
.field { background: #c0c0c0; display: inline-block; }
.column a { color: #000080; text-decoration-thickness: 1px; text-underline-offset: 3px; text-decoration-skip-ink: none; }
.caret { display: inline-block; width: 2px; height: 22px; margin-right: -2px; background: #000; vertical-align: -5px; }
.pointer { position: absolute; left: 769px; top: 282px; width: 13px; height: 21px; }

/* scroll bars */
.vscroll { grid-area: 1 / 3 / 3 / 4; display: flex; flex-direction: column; margin-top: 2px; border-right: 1px solid #ddd; background: #ccc; }
.vscroll button, .hscroll button {
  flex: none;
  width: 16px;
  height: 16px;
  display: flex;
  align-items: center;
  justify-content: center;
  border: 1px solid;
  border-color: #fff #000 #000 #fff;
  background: #c0c0c0;
}
.vscroll svg { width: 10px; height: 10px; }
.track { flex: 1; padding-top: 41px; }
.thumb { border: 1px solid; border-color: #fff #000 #000 #fff; background: #c0c0c0; box-shadow: inset -1px -1px #808080; }
.track .thumb { height: 70px; }
.hscroll { grid-area: 3 / 1 / 4 / 3; display: flex; gap: 1px; border-top: 1px solid #fff; }
.hscroll button { height: 15px; }
.hscroll .thumb { flex: 1; }
.hscroll svg { width: 8px; height: 10px; }

/* table toolbar */
.side {
  flex: none;
  width: 49px;
  display: flex;
  flex-direction: column;
  padding: 3px 4px 0 3px;
  background: linear-gradient(90deg, #fafafa, #e4e4e4 50%, #c8c8c8);
}
.side div { display: flex; }
.side .in { padding-left: 5px; }
.hgrip { height: 2px; margin: 0 3px 5px 6px; background: repeating-linear-gradient(90deg, #000 0 2px, transparent 2px 4px); }
.hsep { height: 8px; margin: 0 8px; background: linear-gradient(transparent 3px, #999 3px 4px, transparent 4px); }
.sidemore { height: 10px; margin: auto 0 1px; display: flex; align-items: center; justify-content: space-between; padding: 0 5px; background: linear-gradient(90deg, #c0c0c0, #888); }
.sidemore svg { width: 6px; height: 8px; }

/* macro toolbar and status bar */
.macros {
  flex: none;
  height: 37px;
  display: flex;
  align-items: center;
  gap: 15px;
  padding-left: 4px;
  font-weight: 200;
  font-size: 15px;
  text-shadow: 0 0 #000;
  background: linear-gradient(#fafafa, #e4e4e4 50%, #c8c8c8);
}
.macros .grip { margin-right: -6px; }
.macros .more { margin-left: auto; margin-right: 2px; justify-content: space-between; }
.status {
  flex: none;
  height: 29px;
  display: grid;
  grid-template-columns: 180fr 181fr 249fr 47px 40px 19px 26px 230fr 73px 140px 46px;
  gap: 4px;
  padding: 3px 4px 2px 5px;
  border-bottom: 1px solid #3c5878;
  background: #c0c0c0;
  font-weight: 200;
  font-size: 16px;
  text-shadow: 0 0 #000;
  white-space: nowrap;
}
.status > span {
  display: flex;
  align-items: center;
  justify-content: center;
  border: 1px solid;
  border-color: #808080 #fff #fff #808080;
  overflow: hidden;
}
.status .l { justify-content: flex-start; padding-left: 5px; }
.status .views { gap: 5px; }
.views svg { width: 20px; height: 12px; }
.views .one { width: 10px; }
.status .slide { gap: 4px; }
.slide svg { width: 12px; height: 12px; }
.slide input { appearance: none; width: 100px; height: 12px; margin: 0; background: linear-gradient(transparent 5px, #808080 5px 6px, #fff 6px 7px, transparent 7px); }
.slide input::-webkit-slider-thumb { appearance: none; width: 9px; height: 9px; border-radius: 50%; background: #6d9cc4; border: 1px solid #39658a; }
```
